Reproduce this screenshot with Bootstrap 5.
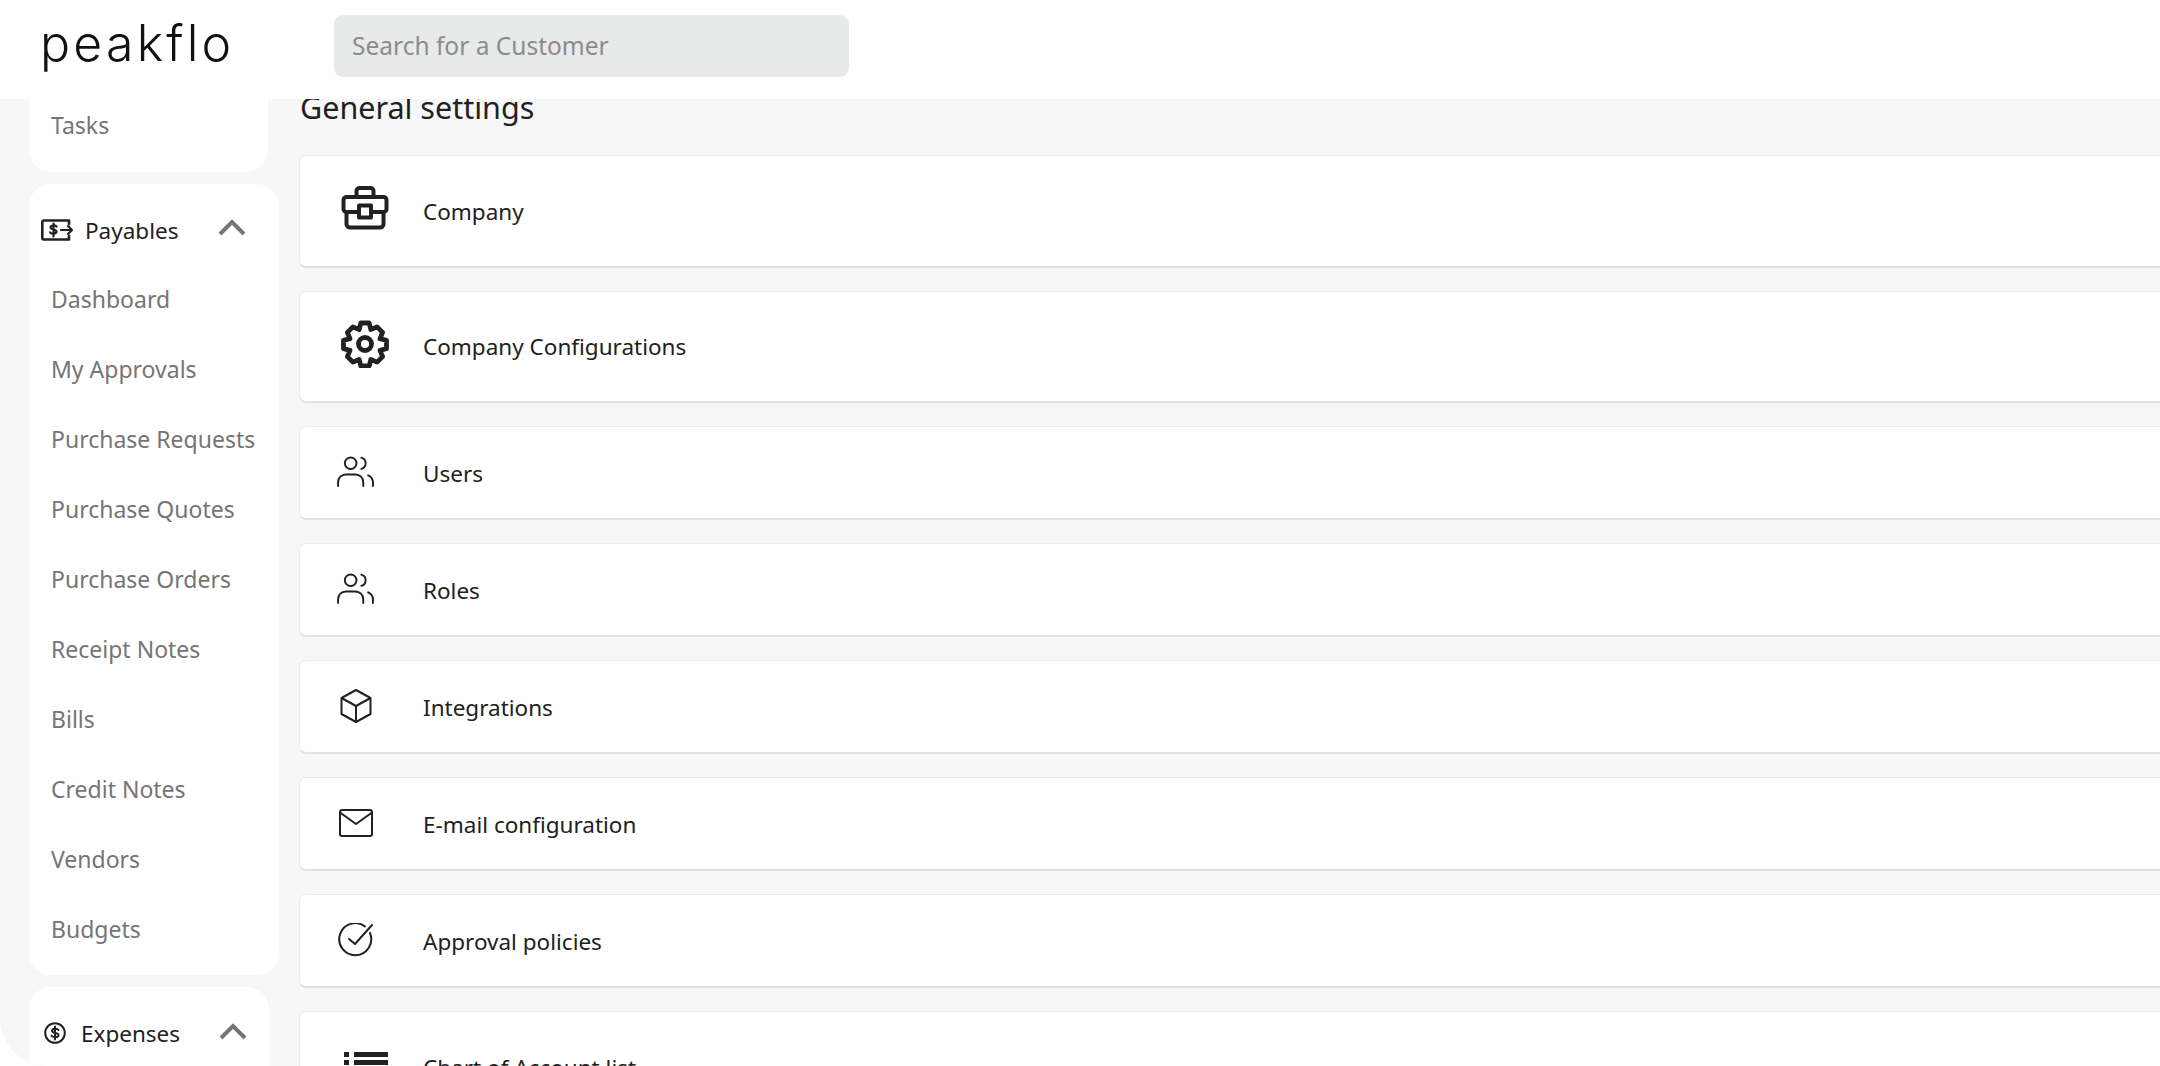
<!DOCTYPE html>
<html lang="en"><head><meta charset="utf-8"><title>Peakflo</title>
<link href="https://cdn.jsdelivr.net/npm/bootstrap@5.3.0/dist/css/bootstrap.min.css" rel="stylesheet">
<style>
html,body{height:100%;overflow:hidden}
body{font-family:"Noto Sans",sans-serif;background:#fff;color:#212121;font-size:22.5px}
.top-bar{height:99px;background:#fff;position:relative;z-index:2}
.brand-word{width:334px;padding-left:40px;font-family:Inter,sans-serif;font-weight:300;font-size:50px;line-height:1;letter-spacing:3.200px;color:#111;margin-top:-14px}
.search-box{width:515px;height:62px;background:#e8eaea;border:0;border-radius:9px;padding:0 18px 2px;font-size:24.500px;color:#212121;margin-top:-7px}
.search-box::placeholder{color:#8c8c8c}
.search-box:focus{background:#e8eaea;box-shadow:none}
.shell{height:967px;overflow:hidden;border-radius:0 0 0 48px;background:#f7f7f7}
.side-col{width:299px;flex:none;padding-left:29px;font-size:23px}
.side-panel{background:#fff;border-radius:22px;margin-bottom:12px}
.panel-a{width:239px;height:73px;border-radius:0 0 22px 22px;padding:8px 0 0 22px;color:#757575;line-height:36px}
.panel-b{width:250px;height:791px}
.panel-c{width:240px;height:100px}
.panel-head{height:80px;padding:26px 0 0 12px}
.panel-c .panel-head{padding:27px 0 0 15px}
.head-label{line-height:42px;margin-left:10px;width:133px;font-size:22.500px}
.panel-c .head-label{margin-left:15px;width:138px;line-height:40px}
.side-link{height:70px;line-height:70px;padding-left:22px;color:#757575;text-decoration:none;display:block}
.main-col{flex:1;min-width:0;margin-right:-30px;margin-top:-14px}
.page-title{font-size:30.500px;line-height:44px;font-weight:400;margin:0 0 26px 1px;color:#212121}
.set-row{background:#fff;border:1px solid #ececec;border-bottom:2px solid #e2e2e2;border-radius:7px;margin-bottom:23px;color:#212121}
.row-tall{height:112.500px}
.row-low{height:94px}
.set-label{padding-top:2px}
.glyph-slot{width:123px;flex:none}
.row-tall .glyph-slot{padding-left:41px;margin-top:-5px}
.row-low .glyph-slot{padding-left:37px;margin-top:-2px}
.glyph-slot svg{display:block}
</style></head>
<body>
<header class="top-bar d-flex align-items-center">
  <div class="brand-word">peakflo</div>
  <input class="form-control search-box" type="text" placeholder="Search for a Customer">
</header>
<div class="shell d-flex">
  <aside class="side-col">
    <div class="side-panel panel-a">Tasks</div>
    <div class="side-panel panel-b">
      <div class="panel-head d-flex align-items-start">
        <svg class="mt-2" width="34" height="24" viewBox="0 0 34 24" fill="none" stroke="#212121" stroke-width="2.600" stroke-linecap="round" stroke-linejoin="round"><path d="M28 6V2.500H2.500a1.500 1.500 0 0 0-1.200 1.500v16a1.500 1.500 0 0 0 1.200 1.500H28V18"/><path stroke-width="2.200" d="M15.500 8.500c-.6-1.400-6-1.600-6 .8 0 3 6.400 1.600 6 4.600-.3 2.200-5.800 2-6.400.4M12.500 5.500v13M20 12h11M27 8l4 4-4 4"/></svg>
        <span class="head-label">Payables</span>
        <svg class="mt-2" width="28" height="18" viewBox="0 0 28 18" fill="none" stroke="#757575" stroke-width="4"><path d="M2 16 14 4l12 12"/></svg>
      </div>
      <a class="side-link" href="#">Dashboard</a>
      <a class="side-link" href="#">My Approvals</a>
      <a class="side-link" href="#">Purchase Requests</a>
      <a class="side-link" href="#">Purchase Quotes</a>
      <a class="side-link" href="#">Purchase Orders</a>
      <a class="side-link" href="#">Receipt Notes</a>
      <a class="side-link" href="#">Bills</a>
      <a class="side-link" href="#">Credit Notes</a>
      <a class="side-link" href="#">Vendors</a>
      <a class="side-link" href="#">Budgets</a>
    </div>
    <div class="side-panel panel-c">
      <div class="panel-head d-flex align-items-start">
        <svg class="mt-2" width="22" height="22" viewBox="0 0 22 22" fill="none" stroke="#212121" stroke-width="2" stroke-linecap="round"><circle cx="11" cy="11" r="9.800"/><path d="M14.500 8c-.6-1.600-6.500-2-6.500.8 0 3 6.800 1.500 6.500 4.500-.3 2.400-6 2.200-7 .3M11 4.500v13"/></svg>
        <span class="head-label">Expenses</span>
        <svg class="mt-2" width="28" height="18" viewBox="0 0 28 18" fill="none" stroke="#757575" stroke-width="4"><path d="M2 16 14 4l12 12"/></svg>
      </div>
    </div>
  </aside>
  <main class="main-col">
    <h5 class="page-title">General settings</h5>
    <div class="set-row row-tall d-flex align-items-center">
      <div class="glyph-slot"><svg width="48" height="44" viewBox="0 0 48 44" fill="none" stroke="#212121" stroke-width="4" stroke-linejoin="round"><path d="M15.500 12V5a3 3 0 0 1 3-3h11a3 3 0 0 1 3 3v7"/><rect x="2.500" y="11" width="43" height="15" rx="3"/><path d="M5.500 26v12a3.500 3.500 0 0 0 3.500 3.500h30a3.500 3.500 0 0 0 3.500-3.500V26"/><rect x="18" y="19.500" width="12" height="12" fill="#fff"/></svg></div>
      <span class="set-label">Company</span>
    </div>
    <div class="set-row row-tall d-flex align-items-center">
      <div class="glyph-slot"><svg width="48" height="48" viewBox="0 0 48 48" fill="none" stroke="#212121" stroke-width="4.800" stroke-linejoin="round"><path d="M19.800 3h8.400l1.600 6.500 6.300-2.600 5.500 5.500-2.600 6.300 6.500 1.600v8.400l-6.500 1.600 2.600 6.300-5.500 5.500-6.300-2.600-1.600 6.500h-8.400l-1.600-6.500-6.300 2.600-5.500-5.500 2.600-6.300-6.500-1.600v-8.400l6.500-1.600-2.600-6.300 5.500-5.500 6.300 2.600z"/><circle cx="24" cy="24" r="6.500"/></svg></div>
      <span class="set-label">Company Configurations</span>
    </div>
    <div class="set-row row-low d-flex align-items-center">
      <div class="glyph-slot"><svg width="37" height="31" viewBox="0 0 38 32" fill="none" stroke="#212121" stroke-width="2" stroke-linecap="round"><circle cx="14" cy="7.500" r="6"/><path d="M1 31v-4a8 8 0 0 1 8-8h10a8 8 0 0 1 8 8v4M25 1.700a6 6 0 0 1 0 11.600M32 20a8 8 0 0 1 5 7v4"/></svg></div>
      <span class="set-label">Users</span>
    </div>
    <div class="set-row row-low d-flex align-items-center">
      <div class="glyph-slot"><svg width="37" height="31" viewBox="0 0 38 32" fill="none" stroke="#212121" stroke-width="2" stroke-linecap="round"><circle cx="14" cy="7.500" r="6"/><path d="M1 31v-4a8 8 0 0 1 8-8h10a8 8 0 0 1 8 8v4M25 1.700a6 6 0 0 1 0 11.600M32 20a8 8 0 0 1 5 7v4"/></svg></div>
      <span class="set-label">Roles</span>
    </div>
    <div class="set-row row-low d-flex align-items-center">
      <div class="glyph-slot"><svg width="38" height="34" viewBox="0 0 38 34" fill="none" stroke="#212121" stroke-width="2" stroke-linejoin="round"><path d="M19 1 33.500 9v16L19 33 4.500 25V9z"/><path d="M4.500 9 19 17l14.500-8M19 17v16"/></svg></div>
      <span class="set-label">Integrations</span>
    </div>
    <div class="set-row row-low d-flex align-items-center">
      <div class="glyph-slot"><svg width="38" height="28" viewBox="0 0 38 28" fill="none" stroke="#212121" stroke-width="2" stroke-linejoin="round"><rect x="3" y="1" width="32" height="26" rx="2"/><path d="M3 3.500 19 15 35 3.500"/></svg></div>
      <span class="set-label">E-mail configuration</span>
    </div>
    <div class="set-row row-low d-flex align-items-center">
      <div class="glyph-slot"><svg width="38" height="34" viewBox="0 0 38 34" fill="none" stroke="#212121" stroke-width="2" stroke-linecap="round" stroke-linejoin="round"><path d="M33 10A16 16 0 1 1 28 3.500"/><path d="M12 16l6 5L35 2"/></svg></div>
      <span class="set-label">Approval policies</span>
    </div>
    <div class="set-row row-tall d-flex align-items-center">
      <div class="glyph-slot"><svg width="48" height="44" viewBox="0 0 48 44" fill="#212121"><rect x="3" y="10" width="5" height="5"/><rect x="13" y="10" width="34" height="5"/><rect x="3" y="18" width="5" height="5"/><rect x="13" y="18" width="34" height="5"/><rect x="3" y="26" width="5" height="5"/><rect x="13" y="26" width="34" height="5"/></svg></div>
      <span class="set-label">Chart of Account list</span>
    </div>
  </main>
</div>
<script src="https://cdn.jsdelivr.net/npm/bootstrap@5.3.0/dist/js/bootstrap.bundle.min.js"></script>
</body></html>
